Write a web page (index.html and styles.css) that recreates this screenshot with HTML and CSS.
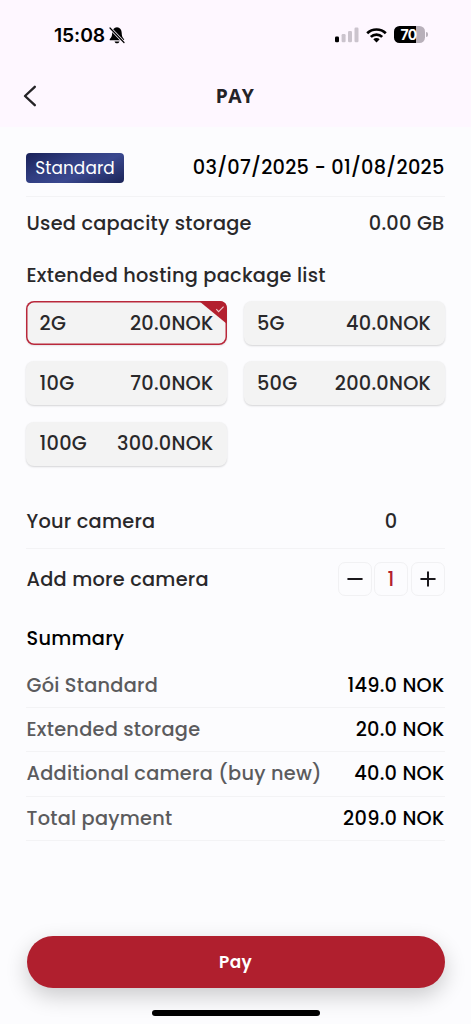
FILE: index.html
```html
<!DOCTYPE html>
<html lang="en">
<head>
<meta charset="utf-8">
<title>Pay</title>
<link rel="stylesheet" href="styles.css">
</head>
<body>
<div class="screen">
  <header class="top">
    <div class="status">
      <div class="clock"><span class="time">15:08</span>
        <svg class="bell" viewBox="0 0 16 17" width="16" height="17"><path d="M8 .3C5 .7 3.200 2.800 3.200 5.700c0 3.200-.8 4.600-2.300 6.200-.5.700-.2 1.400.6 1.400h12.800c.8 0 1.200-.7.600-1.400-1.500-1.600-2.200-3-2.200-6.200C12.700 2.800 11 .7 8 .3zM5.500 14.400c.5 1.300 1.400 1.900 2.500 1.900s2-.6 2.500-1.900z"/><path d="M1 1l14 14.500" stroke="#fef7ff" stroke-width="2.800"/><path d="M1 1l14 14.500" stroke="#000" stroke-width="1.200" stroke-linecap="round"/></svg>
      </div>
      <div class="indicators">
        <svg viewBox="0 0 24 16" width="24" height="16"><rect x="0" y="9.500" width="4" height="5.800" rx="1.200"/><g fill="#cbc4cd"><rect x="6.600" y="7" width="4" height="8.300" rx="1.200"/><rect x="13" y="4" width="4" height="11.300" rx="1.200"/><rect x="19.500" y=".5" width="4" height="14.800" rx="1.200"/></g></svg>
        <svg class="wifi" viewBox="0 0 21 16" width="21" height="16"><g fill="none" stroke="#000" stroke-width="2.700"><path d="M1.200 6.300a13.300 13.300 0 0 1 18.600 0"/><path d="M4.800 9.900a8.200 8.200 0 0 1 11.400 0"/></g><path d="M10.500 15.400l-3.200-3.200a4.600 4.600 0 0 1 6.400 0z"/></svg>
        <div class="battery"><span class="level">70</span></div><i class="tip"></i>
      </div>
    </div>
    <div class="nav">
      <svg class="back" viewBox="0 0 14 22" width="14" height="22"><path d="M11.800 1.800L2 11l9.800 9.200" fill="none" stroke="#242326" stroke-width="2.400" stroke-linecap="round" stroke-linejoin="round"/></svg>
      <h1>PAY</h1>
    </div>
  </header>
  <main>
    <section class="row plan"><span class="badge">Standard</span><span class="dates">03/07/2025 - 01/08/2025</span></section>
    <section class="row used"><span>Used capacity storage</span><span class="size">0.00 GB</span></section>
    <h2 class="list-title">Extended hosting package list</h2>
    <section class="packages">
      <div class="card selected"><span>2G</span><span class="price">20.0NOK</span>
        <svg class="mark" viewBox="0 0 28 23" width="28" height="23"><path d="M0 0h20.500q7.500 0 7.500 7.500v15.500z" fill="#b3202f"/><path d="M17.300 8.200l2.300 2.400 5-5" fill="none" stroke="#f0c9ce" stroke-width="1.100"/></svg>
      </div>
      <div class="card"><span>5G</span><span class="price">40.0NOK</span></div>
      <div class="card"><span>10G</span><span class="price">70.0NOK</span></div>
      <div class="card"><span>50G</span><span class="price">200.0NOK</span></div>
      <div class="card"><span>100G</span><span class="price">300.0NOK</span></div>
    </section>
    <section class="row yours"><span>Your camera</span><span class="count">0</span></section>
    <section class="row add"><span>Add more camera</span>
      <div class="stepper">
        <span class="step"><svg viewBox="0 0 16 16" width="16" height="16"><path d="M1.200 8h13.600"/></svg></span>
        <span class="step value">1</span>
        <span class="step"><svg viewBox="0 0 16 16" width="16" height="16"><path d="M1.200 8h13.600M8 1.200v13.600"/></svg></span>
      </div>
    </section>
    <h2 class="summary-title">Summary</h2>
    <section class="summary">
      <div class="line"><span>Gói Standard</span><b>149.0 NOK</b></div>
      <div class="line"><span>Extended storage</span><b>20.0 NOK</b></div>
      <div class="line"><span>Additional camera (buy new)</span><b>40.0 NOK</b></div>
      <div class="line"><span>Total payment</span><b>209.0 NOK</b></div>
    </section>
  </main>
  <footer><button class="pay">Pay</button><div class="home"></div></footer>
</div>
</body>
</html>
```
FILE: styles.css
```css
* { box-sizing: border-box; }
body { margin: 0; background: #fcfcfe; font-family: Poppins, Inter, sans-serif; font-size: 19.320px; font-weight: 500; color: #29282a; letter-spacing: .25px; }
.screen { width: 471px; height: 1024px; display: flex; flex-direction: column; overflow: hidden; }
.top { height: 127px; background: #fef7ff; flex: none; }
.status { height: 69px; padding: 0 43px 0 54px; display: flex; align-items: center; justify-content: space-between; }
.clock { display: flex; align-items: center; gap: 4px; }
.time { font: 600 19.320px Inter, sans-serif; letter-spacing: -.1px; color: #000; }
.bell { margin-top: 1px; }
.indicators { display: flex; align-items: center; }
.wifi { margin: 0 7px 0 7px; }
.battery { width: 31px; height: 17px; border-radius: 5.500px; background: linear-gradient(90deg, #000 71%, #b8b0ba 71%); display: flex; align-items: center; justify-content: center; }
.level { font: 700 14px/17px Inter, sans-serif; color: #fff; letter-spacing: -.6px; margin-right: 2px; }
.tip { width: 2px; height: 5px; margin-left: 1px; border-radius: 0 2px 2px 0; background: #b8b0ba; }
.nav { height: 54px; display: grid; grid-template-columns: 60px 1fr 60px; align-items: center; }
.back { margin-left: 23px; }
h1 { margin: 0; padding-bottom: 2px; text-align: center; font: 700 19.320px "Noto Sans", sans-serif; letter-spacing: 1.400px; color: #242326; }
main { padding: 0 26.500px 0 26px; flex: 1; }
.row { display: flex; align-items: center; justify-content: space-between; }
.plan { height: 70px; padding-top: 12px; border-bottom: 1px solid #f3f3f5; }
.badge { width: 98px; height: 30px; display: flex; align-items: center; justify-content: center; border-radius: 4px; color: #fff; font-size: 16.900px; font-weight: 400; letter-spacing: .1px; background: linear-gradient(155deg, #192158 0%, #303d80 35%, #3a488f 60%, #1b2457 100%); }
.dates { color: #000; }
.used { height: 52px; }
h2 { margin: 0; font-size: 19.320px; font-weight: 500; }
.list-title { height: 52px; line-height: 53px; }
.packages { display: grid; grid-template-columns: 201px 201px; column-gap: 16.500px; row-gap: 16.400px; }
.card { position: relative; height: 44px; padding: 0 13.500px 0 13.500px; display: flex; align-items: center; justify-content: space-between; border-radius: 8px; background: #f3f3f3; box-shadow: 0 1px 2px rgba(0,0,0,.16); }
.selected { box-shadow: inset 0 0 0 1.500px #b9283b, 0 1px 2px rgba(0,0,0,.1); }
.mark { position: absolute; top: 0; right: 0; }
.yours { height: 55px; margin-top: 28.200px; padding-top: 1.500px; border-bottom: 1px solid #f3f3f5; }
.count { width: 107px; text-align: center; }
.add { height: 60.500px; }
.stepper { display: flex; gap: 2.500px; }
.step { width: 34px; height: 34px; border: 1px solid #f1f1f3; border-radius: 7px; display: flex; align-items: center; justify-content: center; }
.step path { fill: none; stroke: #1b181c; stroke-width: 2; stroke-linecap: round; }
.value { color: #b3202f; }
.summary-title { height: 54px; line-height: 59px; color: #000; }
.line { height: 44.400px; display: flex; align-items: center; justify-content: space-between; border-bottom: 1px solid #f3f3f5; color: #5b5b5d; }
.line b { color: #000; font-weight: 500; }
.used > span:first-child, .list-title, .yours > span:first-child, .add > span, .summary-title, .line > span { padding-left: .5px; }
footer { height: 88px; padding: 0 26.500px; flex: none; }
.pay { display: block; width: 100%; height: 51.500px; border: 0; border-radius: 26px; background: #b01f2e; color: #fff; font-family: Poppins, Inter, sans-serif; font-size: 16.900px; font-weight: 600; letter-spacing: .3px; box-shadow: 0 8px 22px rgba(0,0,0,.2); }
.home { width: 168px; height: 6px; margin: 22.500px auto 0; border-radius: 3px; background: #000; }
```
